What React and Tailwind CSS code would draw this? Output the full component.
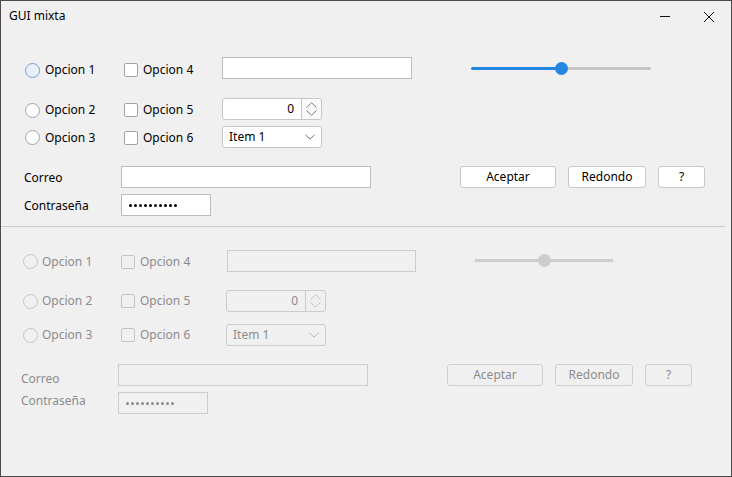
import React from "react";

function Radio({ label, active, disabled, gap = "ml-[5px]" }) {
  const circle = disabled
    ? "border-[#c4c4c4] bg-transparent"
    : active
    ? "border-[#6f9fdb] bg-[#e9f0fa]"
    : "border-[#a2a2a2] bg-white";
  return (
    <div className="flex items-center">
      <div className={`w-[15px] h-[15px] rounded-full border ${circle}`} />
      <span className={`${gap} ${disabled ? "text-[#8c8c8c]" : "text-black"}`}>{label}</span>
    </div>
  );
}

function Check({ label, disabled }) {
  return (
    <div className="flex items-center">
      <div
        className={`w-[14px] h-[14px] rounded-[2px] border ${
          disabled ? "border-[#c4c4c4]" : "border-[#a2a2a2] bg-white"
        }`}
      />
      <span className={`ml-[5px] ${disabled ? "text-[#8c8c8c]" : "text-black"}`}>{label}</span>
    </div>
  );
}

function TextBox({ w, disabled, children }) {
  return (
    <div
      className={`${w} h-[22px] border flex items-center ${
        disabled ? "border-[#cccccc] bg-[#f0f0f0]" : "border-[#bcbcbc] bg-white"
      }`}
    >
      {children}
    </div>
  );
}

function Spinner({ disabled }) {
  const c = disabled ? "#c4c4c4" : "#7a7a7a";
  return (
    <div
      className={`w-[100px] h-[22px] border rounded-[3px] flex ${
        disabled ? "border-[#cccccc] bg-[#f0f0f0]" : "border-[#c6c6c6] bg-white"
      }`}
    >
      <div
        className={`w-[78px] flex items-center justify-end pr-[7px] ${
          disabled ? "text-[#8c8c8c]" : "text-black"
        }`}
      >
        0
      </div>
      <div className={`w-px h-full ${disabled ? "bg-[#cccccc]" : "bg-[#c6c6c6]"}`} />
      <div className={`flex-1 flex items-center justify-center ${disabled ? "" : "bg-[#fafafa]"} rounded-r-[3px]`}>
        <svg width="11" height="14" viewBox="0 0 11 14" fill="none" stroke={c} strokeWidth="1">
          <path d="M0.5 5.5 L5.5 0.8 L10.5 5.5" />
          <path d="M0.5 8.5 L5.5 13.2 L10.5 8.5" />
        </svg>
      </div>
    </div>
  );
}

function Combo({ disabled }) {
  return (
    <div
      className={`w-[100px] h-[22px] border rounded-[3px] flex items-center pl-[6px] pr-[6px] ${
        disabled ? "border-[#cccccc] bg-[#f0f0f0] text-[#8c8c8c]" : "border-[#c6c6c6] bg-white text-black"
      }`}
    >
      <span className="flex-1">Item 1</span>
      <svg width="10" height="6" viewBox="0 0 10 6" fill="none" stroke={disabled ? "#b0b0b0" : "#6a6a6a"} strokeWidth="1">
        <path d="M0.5 0.8 L5 5.2 L9.5 0.8" />
      </svg>
    </div>
  );
}

function Slider({ w, thumbLeft, disabled }) {
  return (
    <div className={`${w} h-[14px] flex items-center`}>
      {disabled ? (
        <div className="flex-1 h-[3px] bg-[#cdcdcd] rounded-full" />
      ) : (
        <>
          <div className="h-[3px] bg-[#2386e2] rounded-l-full" style={{ width: thumbLeft }} />
          <div className="w-[13px] h-[13px] rounded-full bg-[#2386e2] -mx-[6px] z-10" />
          <div className="flex-1 h-[3px] bg-[#c6c6c6] rounded-r-full" />
        </>
      )}
    </div>
  );
}

function SliderDisabled({ w, thumbLeft }) {
  return (
    <div className={`${w} h-[14px] flex items-center`}>
      <div className="h-[3px] bg-[#cdcdcd]" style={{ width: thumbLeft }} />
      <div className="w-[13px] h-[13px] rounded-full bg-[#cdcdcd] -mx-[6px] z-10" />
      <div className="flex-1 h-[3px] bg-[#cdcdcd]" />
    </div>
  );
}

function Btn({ w, label, disabled, ml }) {
  return (
    <div
      className={`${w} ${ml} h-[22px] border rounded-[3px] flex items-center justify-center ${
        disabled ? "border-[#cfcfcf] bg-[#f0f0f0] text-[#8c8c8c]" : "border-[#c8c8c8] bg-white text-black"
      }`}
    >
      {label}
    </div>
  );
}

function Dots({ disabled }) {
  return (
    <div className="flex gap-[2px] ml-[7px]">
      {Array.from({ length: 10 }).map((_, i) => (
        <div
          key={i}
          className={`rounded-full ${disabled ? "w-[3px] h-[3px] bg-[#8a8a8a]" : "w-[3px] h-[3px] bg-black"}`}
        />
      ))}
    </div>
  );
}

export default function App() {
  return (
    <div className="w-[732px] h-[477px] border border-[#4a4a4a] bg-[#f0f0f0] text-[12px] leading-none font-['Noto_Sans','Segoe_UI',sans-serif] overflow-hidden">
      {/* Title bar */}
      <div className="h-[31px] flex items-center pl-[8px] relative">
        <span className="text-black mt-[-1px]">GUI mixta</span>
        <div className="ml-auto flex items-center">
          <svg width="12" height="12" viewBox="0 0 12 12" className="mr-[32px] mt-[-2px]">
            <path d="M1 6.5 H11" stroke="#111" strokeWidth="1" />
          </svg>
          <svg width="12" height="12" viewBox="0 0 12 12" className="mr-[16px]">
            <path d="M1 1 L11 11 M11 1 L1 11" stroke="#111" strokeWidth="1" />
          </svg>
        </div>
      </div>

      {/* Active section */}
      <div className="pt-[25px]">
        <div className="flex items-center h-[22px] pl-[24px]">
          <div className="w-[99px] mt-[4px]">
            <Radio label="Opcion 1" active />
          </div>
          <div className="w-[98px] mt-[4px]">
            <Check label="Opcion 4" />
          </div>
          <TextBox w="w-[190px]" />
          <div className="ml-[59px] mt-[1px]">
            <Slider w="w-[180px]" thumbLeft={90} />
          </div>
        </div>
        <div className="flex items-center h-[22px] pl-[24px] mt-[19px]">
          <div className="w-[99px] mt-[2px]">
            <Radio label="Opcion 2" />
          </div>
          <div className="w-[98px] mt-[2px]">
            <Check label="Opcion 5" />
          </div>
          <Spinner />
        </div>
        <div className="flex items-center h-[22px] pl-[24px] mt-[6px]">
          <div className="w-[99px] mt-[1px]">
            <Radio label="Opcion 3" />
          </div>
          <div className="w-[98px] mt-[1px]">
            <Check label="Opcion 6" />
          </div>
          <Combo />
        </div>
        <div className="flex items-center h-[22px] pl-[23px] mt-[18px]">
          <div className="w-[97px] text-black mt-[1px]">Correo</div>
          <TextBox w="w-[250px]" />
          <Btn w="w-[96px]" ml="ml-[89px]" label="Aceptar" />
          <Btn w="w-[78px]" ml="ml-[12px]" label="Redondo" />
          <Btn w="w-[47px]" ml="ml-[12px]" label="?" />
        </div>
        <div className="flex items-center h-[22px] pl-[23px] mt-[6px]">
          <div className="w-[97px] text-black mt-[2px]">Contraseña</div>
          <TextBox w="w-[90px]">
            <Dots />
          </TextBox>
        </div>
        <div className="mt-[10px] h-px bg-[#cacaca] w-[724px]" />
      </div>

      {/* Disabled section */}
      <div>
        <div className="flex items-center h-[22px] pl-[22px] mt-[23px]">
          <div className="w-[98px] mt-[1px]">
            <Radio label="Opcion 1" disabled gap="ml-[4px]" />
          </div>
          <div className="w-[106px] mt-[1px]">
            <Check label="Opcion 4" disabled />
          </div>
          <TextBox w="w-[189px]" disabled />
          <div className="ml-[59px] mt-[-2px]">
            <SliderDisabled w="w-[138px]" thumbLeft={69} />
          </div>
        </div>
        <div className="flex items-center h-[22px] pl-[22px] mt-[18px]">
          <div className="w-[98px]">
            <Radio label="Opcion 2" disabled gap="ml-[4px]" />
          </div>
          <div className="w-[105px]">
            <Check label="Opcion 5" disabled />
          </div>
          <Spinner disabled />
        </div>
        <div className="flex items-center h-[22px] pl-[22px] mt-[12px]">
          <div className="w-[98px]">
            <Radio label="Opcion 3" disabled gap="ml-[4px]" />
          </div>
          <div className="w-[105px]">
            <Check label="Opcion 6" disabled />
          </div>
          <Combo disabled />
        </div>
        <div className="flex items-center h-[22px] pl-[20px] mt-[18px]">
          <div className="w-[97px] text-[#8c8c8c] mt-[8px]">Correo</div>
          <TextBox w="w-[250px]" disabled />
          <Btn w="w-[96px]" ml="ml-[79px]" label="Aceptar" disabled />
          <Btn w="w-[78px]" ml="ml-[12px]" label="Redondo" disabled />
          <Btn w="w-[47px]" ml="ml-[12px]" label="?" disabled />
        </div>
        <div className="flex items-center h-[22px] pl-[20px] mt-[6px]">
          <div className="w-[97px] text-[#8c8c8c] mt-[-4px]">Contraseña</div>
          <TextBox w="w-[90px]" disabled>
            <Dots disabled />
          </TextBox>
        </div>
      </div>
    </div>
  );
}
